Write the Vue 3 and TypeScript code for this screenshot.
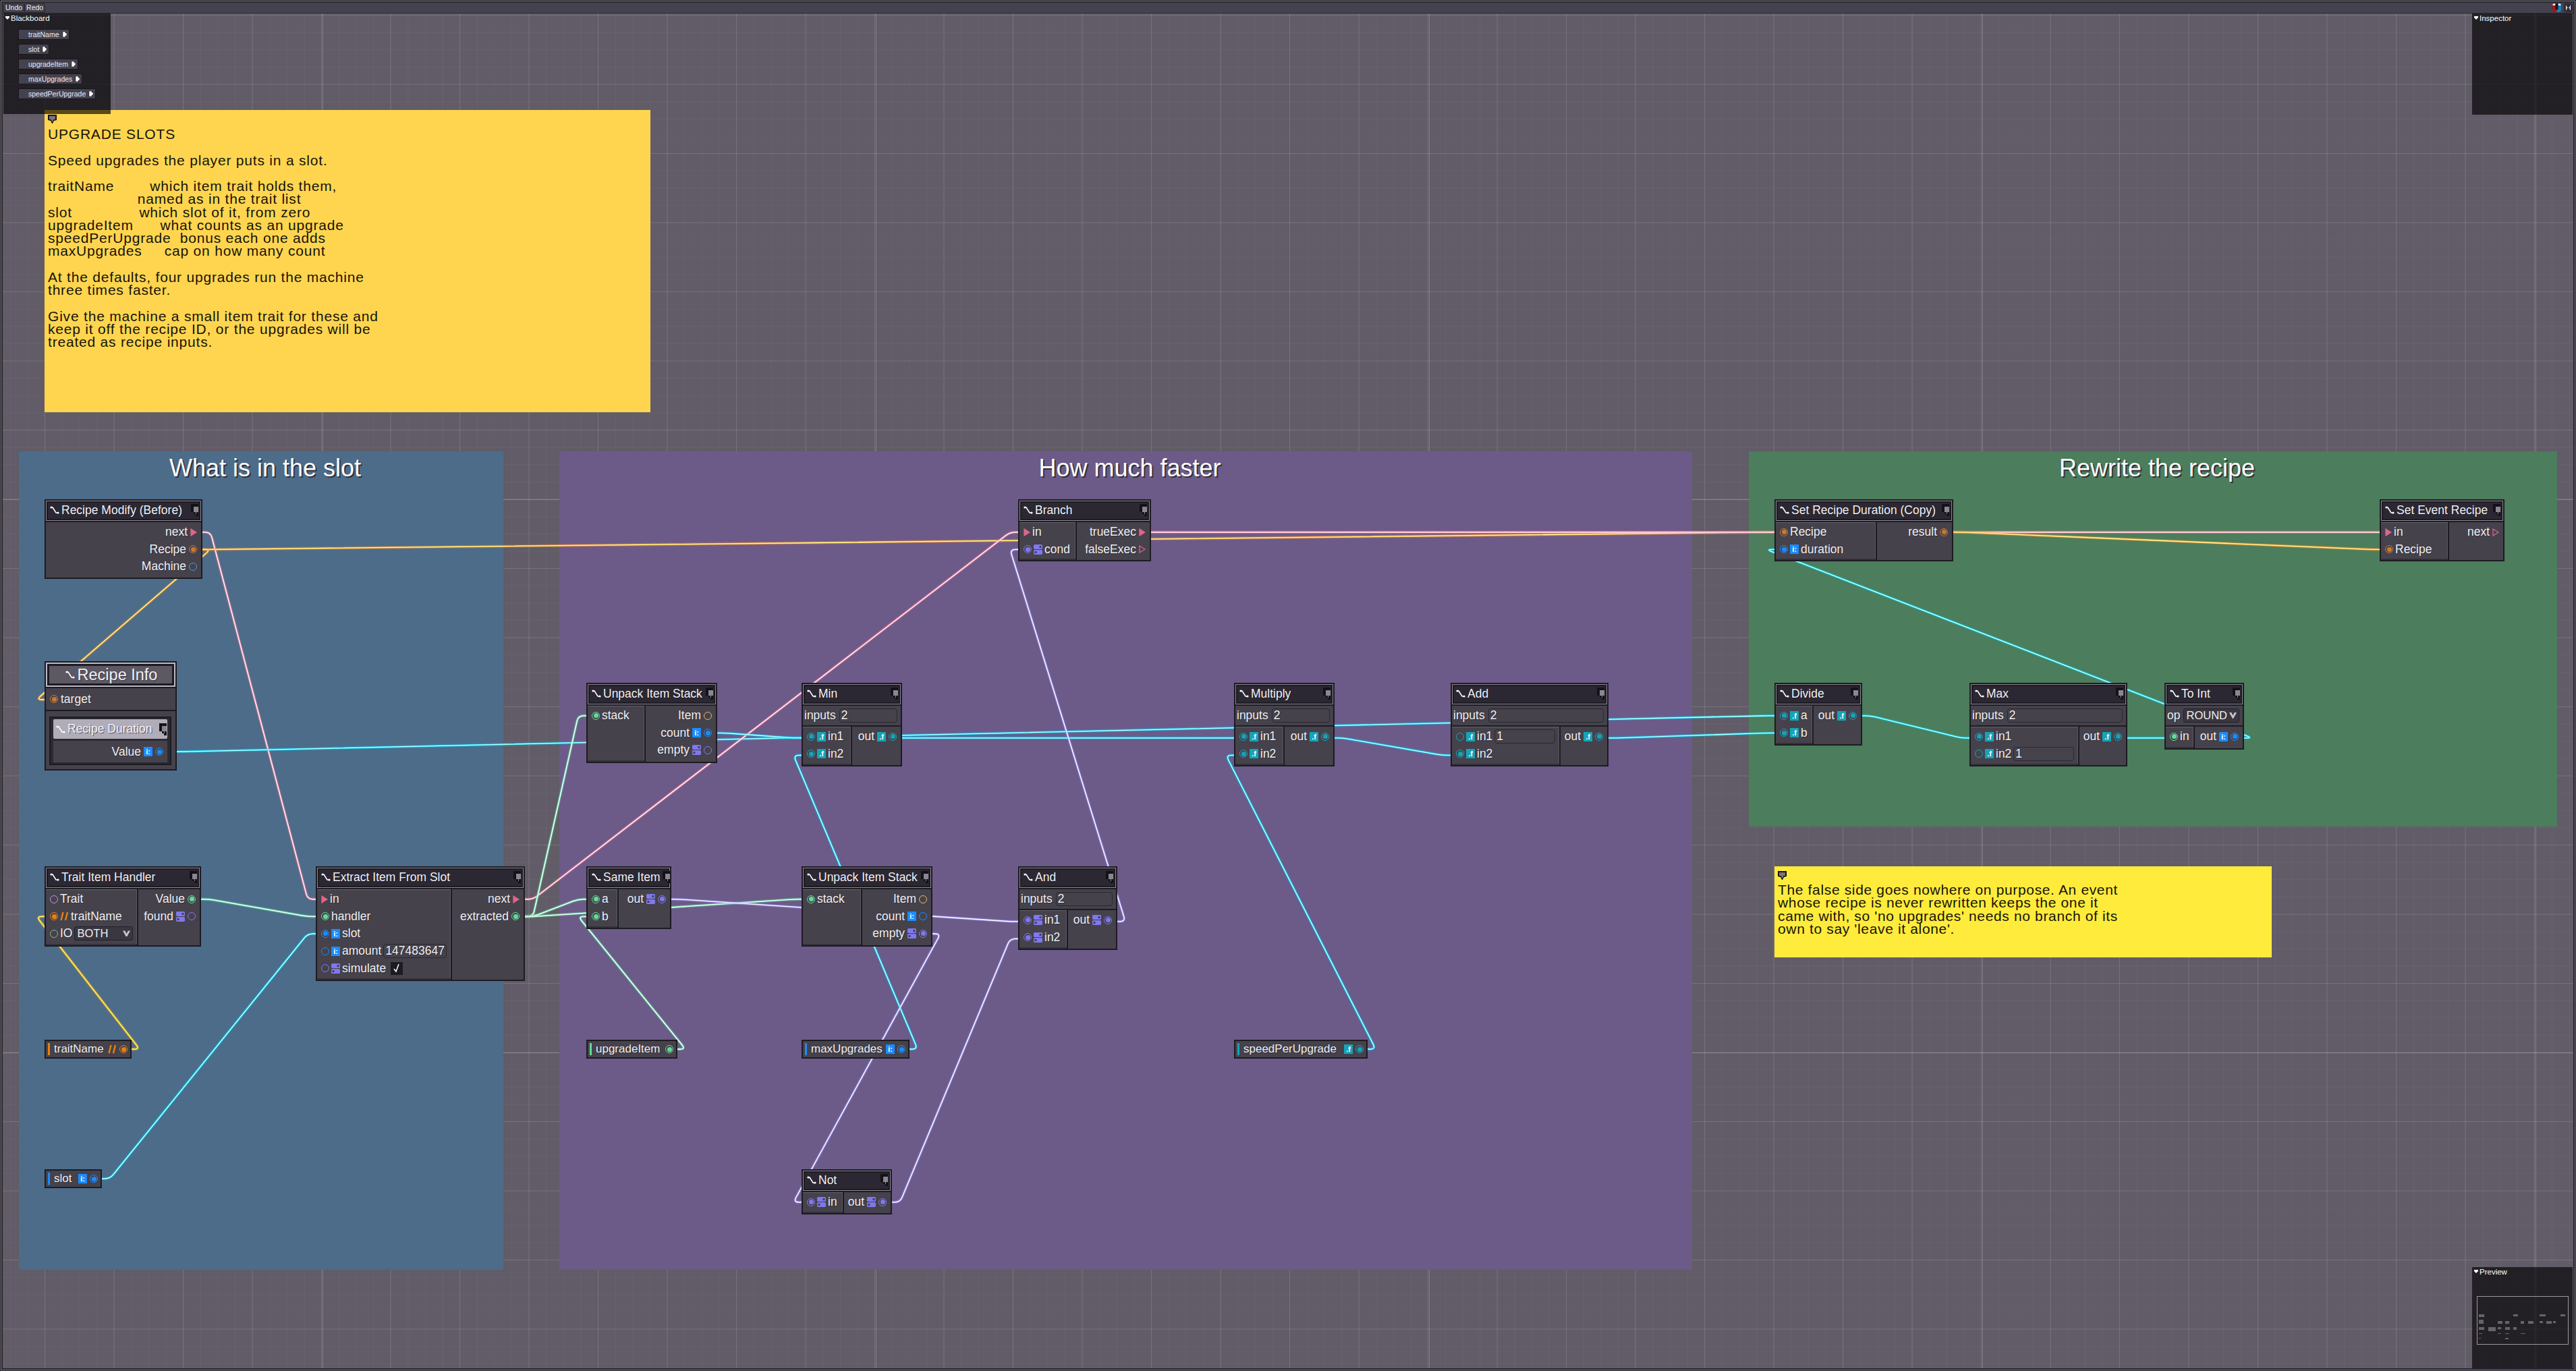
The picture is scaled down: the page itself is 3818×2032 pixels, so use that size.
<script setup lang="ts">
import { computed } from 'vue'

type Kind = 'exec' | 'recipe' | 'machine' | 'item' | 'hollowitem' | 'int' | 'float' | 'bool' | 'str' | 'trait' | 'io'
type Glyph = 'i' | 'f' | 'b' | 's'

interface Port {
  label: string
  kind: Kind
  on?: boolean
  icon?: Glyph
  field?: string
  select?: string
  check?: boolean
}

interface GraphNode {
  id: string
  title: string
  x: number
  y: number
  w: number
  h: number
  split?: number
  attr?: { label: string; value?: string; select?: string }
  left?: Port[]
  right?: Port[]
}

interface VarNode {
  id: string
  label: string
  x: number
  y: number
  w: number
  kind: Kind
  icon?: Glyph
}

const groups = [
  { title: 'What is in the slot', x: 28, y: 669, w: 718, h: 1213, tone: 'blue' },
  { title: 'How much faster', x: 829, y: 669, w: 1679, h: 1213, tone: 'purple' },
  { title: 'Rewrite the recipe', x: 2592, y: 669, w: 1198, h: 556, tone: 'green' },
]

const notes = [
  {
    x: 66, y: 163, w: 898, h: 448, tone: 'amber',
    text: `UPGRADE SLOTS

Speed upgrades the player puts in a slot.

traitName        which item trait holds them,
                    named as in the trait list
slot               which slot of it, from zero
upgradeItem      what counts as an upgrade
speedPerUpgrade  bonus each one adds
maxUpgrades     cap on how many count

At the defaults, four upgrades run the machine
three times faster.

Give the machine a small item trait for these and
keep it off the recipe ID, or the upgrades will be
treated as recipe inputs.`,
  },
  {
    x: 2630, y: 1284, w: 737, h: 135, tone: 'lemon',
    text: `The false side goes nowhere on purpose. An event
whose recipe is never rewritten keeps the one it
came with, so 'no upgrades' needs no branch of its
own to say 'leave it alone'.`,
  },
]

const f = (label: string, on = true, field?: string): Port => ({ label, kind: 'float', icon: 'f', on, field })
const b = (label: string, on = true): Port => ({ label, kind: 'bool', icon: 'b', on })
const exec = (label: string, on = true): Port => ({ label, kind: 'exec', on })

const nodes: GraphNode[] = [
  { id: 'modify', title: 'Recipe Modify (Before)', x: 66, y: 740, w: 234, h: 118,
    right: [exec('next'), { label: 'Recipe', kind: 'recipe', on: true }, { label: 'Machine', kind: 'machine' }] },
  { id: 'handler', title: 'Trait Item Handler', x: 66, y: 1284, w: 232, h: 119, split: 137,
    left: [{ label: 'Trait', kind: 'trait' }, { label: 'traitName', kind: 'str', icon: 's', on: true }, { label: 'IO', kind: 'io', select: 'BOTH' }],
    right: [{ label: 'Value', kind: 'item', on: true }, { label: 'found', kind: 'bool', icon: 'b' }] },
  { id: 'extract', title: 'Extract Item From Slot', x: 468, y: 1284, w: 310, h: 170, split: 200,
    left: [exec('in'), { label: 'handler', kind: 'item', on: true }, { label: 'slot', kind: 'int', icon: 'i', on: true },
      { label: 'amount', kind: 'int', icon: 'i', field: '147483647' }, { label: 'simulate', kind: 'bool', icon: 'b', check: true }],
    right: [exec('next'), { label: 'extracted', kind: 'item', on: true }] },
  { id: 'unpack1', title: 'Unpack Item Stack', x: 869, y: 1012, w: 194, h: 119, split: 86,
    left: [{ label: 'stack', kind: 'item', on: true }],
    right: [{ label: 'Item', kind: 'hollowitem' }, { label: 'count', kind: 'int', icon: 'i', on: true }, b('empty', false)] },
  { id: 'min', title: 'Min', x: 1188, y: 1012, w: 149, h: 124, split: 73, attr: { label: 'inputs', value: '2' },
    left: [f('in1'), f('in2')], right: [f('out')] },
  { id: 'branch', title: 'Branch', x: 1509, y: 740, w: 197, h: 92, split: 85,
    left: [exec('in'), b('cond')], right: [exec('trueExec'), exec('falseExec', false)] },
  { id: 'same', title: 'Same Item', x: 869, y: 1284, w: 126, h: 93, split: 46,
    left: [{ label: 'a', kind: 'item', on: true }, { label: 'b', kind: 'item', on: true }], right: [b('out')] },
  { id: 'unpack2', title: 'Unpack Item Stack', x: 1188, y: 1284, w: 194, h: 119, split: 88,
    left: [{ label: 'stack', kind: 'item', on: true }],
    right: [{ label: 'Item', kind: 'hollowitem' }, { label: 'count', kind: 'int', icon: 'i' }, b('empty')] },
  { id: 'and', title: 'And', x: 1509, y: 1284, w: 147, h: 124, split: 72, attr: { label: 'inputs', value: '2' },
    left: [b('in1'), b('in2')], right: [b('out')] },
  { id: 'not', title: 'Not', x: 1188, y: 1733, w: 134, h: 67, split: 61, left: [b('in')], right: [b('out')] },
  { id: 'multiply', title: 'Multiply', x: 1829, y: 1012, w: 149, h: 124, split: 73, attr: { label: 'inputs', value: '2' },
    left: [f('in1'), f('in2')], right: [f('out')] },
  { id: 'add', title: 'Add', x: 2150, y: 1012, w: 234, h: 124, split: 161, attr: { label: 'inputs', value: '2' },
    left: [f('in1', false, '1'), f('in2')], right: [f('out')] },
  { id: 'setDuration', title: 'Set Recipe Duration (Copy)', x: 2630, y: 740, w: 265, h: 92, split: 150,
    left: [{ label: 'Recipe', kind: 'recipe', on: true }, { label: 'duration', kind: 'int', icon: 'i', on: true }],
    right: [{ label: 'result', kind: 'recipe', on: true }] },
  { id: 'setEvent', title: 'Set Event Recipe', x: 3527, y: 740, w: 185, h: 92, split: 101,
    left: [exec('in'), { label: 'Recipe', kind: 'recipe', on: true }], right: [exec('next', false)] },
  { id: 'divide', title: 'Divide', x: 2630, y: 1012, w: 130, h: 93, split: 56, left: [f('a'), f('b')], right: [f('out')] },
  { id: 'max', title: 'Max', x: 2919, y: 1012, w: 234, h: 124, split: 161, attr: { label: 'inputs', value: '2' },
    left: [f('in1'), f('in2', false, '1')], right: [f('out')] },
  { id: 'toInt', title: 'To Int', x: 3208, y: 1012, w: 118, h: 99, split: 43, attr: { label: 'op', select: 'ROUND' },
    left: [{ label: 'in', kind: 'item', on: true }], right: [{ label: 'out', kind: 'int', icon: 'i', on: true }] },
]

const vars: VarNode[] = [
  { id: 'traitName', label: 'traitName', x: 66, y: 1541, w: 129, kind: 'str', icon: 's' },
  { id: 'slot', label: 'slot', x: 66, y: 1733, w: 85, kind: 'int', icon: 'i' },
  { id: 'upgradeItem', label: 'upgradeItem', x: 869, y: 1541, w: 135, kind: 'item' },
  { id: 'maxUpgrades', label: 'maxUpgrades', x: 1188, y: 1541, w: 160, kind: 'int', icon: 'i' },
  { id: 'speedPerUpgrade', label: 'speedPerUpgrade', x: 1829, y: 1541, w: 198, kind: 'float', icon: 'f' },
]

// recipe info has its own markup, so only its box is listed here
const recipeInfo = { x: 66, y: 980, w: 196, h: 162 }

const blackboard = ['traitName', 'slot', 'upgradeItem', 'maxUpgrades', 'speedPerUpgrade']

function outPoint(id: string, i: number): [number, number] {
  if (id === 'recipeInfo') return [262, 1114]
  const v = vars.find((n) => n.id === id)
  if (v) return [v.x + v.w, v.y + 14]
  const n = nodes.find((m) => m.id === id)!
  return [n.x + n.w, portY(n, i)]
}

function inPoint(id: string, i: number): [number, number] {
  if (id === 'recipeInfo') return [66, 1037]
  const n = nodes.find((m) => m.id === id)!
  return [n.x, portY(n, i)]
}

function portY(n: GraphNode, i: number) {
  return n.y + 32 + (n.attr ? 33 : 0) + 4 + (i + 0.5) * 25.6
}

// stub out of the port, straight run, stub into the next port
function wirePath(a: [number, number], d: [number, number]) {
  const stub = 12
  const bx = a[0] + stub
  const cx = d[0] - stub
  const dx = cx - bx
  const dy = d[1] - a[1]
  const len = Math.hypot(dx, dy) || 1
  const r = Math.min(8, len / 2)
  const ux = dx / len
  const uy = dy / len
  return [
    `M${a[0]} ${a[1]}`,
    `L${bx - r} ${a[1]}`,
    `Q${bx} ${a[1]} ${bx + ux * r} ${a[1] + uy * r}`,
    `L${cx - ux * r} ${d[1] - uy * r}`,
    `Q${cx} ${d[1]} ${cx + r} ${d[1]}`,
    `L${d[0]} ${d[1]}`,
  ].join(' ')
}

const links: [string, number, string, number, string][] = [
  ['modify', 0, 'extract', 0, 'exec'],
  ['modify', 1, 'setDuration', 0, 'recipe'],
  ['modify', 1, 'recipeInfo', 0, 'recipe'],
  ['recipeInfo', 0, 'divide', 0, 'int'],
  ['traitName', 0, 'handler', 1, 'str'],
  ['slot', 0, 'extract', 2, 'int'],
  ['handler', 0, 'extract', 1, 'item'],
  ['extract', 0, 'branch', 0, 'exec'],
  ['extract', 1, 'unpack1', 0, 'item'],
  ['extract', 1, 'same', 0, 'item'],
  ['extract', 1, 'unpack2', 0, 'item'],
  ['upgradeItem', 0, 'same', 1, 'item'],
  ['same', 0, 'and', 0, 'bool'],
  ['unpack1', 1, 'min', 0, 'int'],
  ['maxUpgrades', 0, 'min', 1, 'int'],
  ['min', 0, 'multiply', 0, 'int'],
  ['speedPerUpgrade', 0, 'multiply', 1, 'int'],
  ['multiply', 0, 'add', 1, 'int'],
  ['add', 0, 'divide', 1, 'int'],
  ['divide', 0, 'max', 0, 'int'],
  ['max', 0, 'toInt', 0, 'int'],
  ['toInt', 0, 'setDuration', 1, 'int'],
  ['unpack2', 2, 'not', 0, 'bool'],
  ['not', 0, 'and', 1, 'bool'],
  ['and', 0, 'branch', 1, 'bool'],
  ['branch', 0, 'setEvent', 0, 'exec'],
  ['setDuration', 0, 'setEvent', 1, 'recipe'],
]

const wires = computed(() =>
  links.map(([from, i, to, j, tone]) => ({
    d: wirePath(outPoint(from, i), inPoint(to, j)),
    tone,
  })),
)

// the preview draws every node at a small fixed scale
const miniScale = 0.0351
const miniRects = computed(() => {
  const boxes = [
    ...nodes.map((n) => ({ x: n.x, y: n.y, w: n.w, h: n.h })),
    recipeInfo,
    ...vars.map((v) => ({ x: v.x, y: v.y, w: v.w, h: 28 })),
  ]
  return boxes.map((n) => ({
    left: `${2 + (n.x - 66) * miniScale}px`,
    top: `${26 + (n.y - 740) * miniScale}px`,
    width: `${n.w * miniScale}px`,
    height: `${n.h * miniScale}px`,
  }))
})

const box = (n: { x: number; y: number; w: number; h?: number }) => ({
  left: `${n.x}px`,
  top: `${n.y}px`,
  width: `${n.w}px`,
  height: n.h ? `${n.h}px` : undefined,
})
</script>

<template>
  <div class="app">
    <header class="toolbar">
      <button class="tool">Undo</button>
      <button class="tool">Redo</button>
      <span class="spacer"></span>
      <svg class="magnet" viewBox="0 0 13 13" width="13" height="13">
        <path d="M0 1.500 1.500 0H6.500V13H4Q0 13 0 9z" fill="#a8150f" />
        <path d="M6.500 0H11.500L13 1.500V9q0 4-4 4H6.500z" fill="#1b7cc4" />
        <rect x="0.500" y="0.500" width="4" height="2.500" fill="#fff" />
        <rect x="8.500" y="0.500" width="4" height="2.500" fill="#fff" />
        <path d="M4.500 0h4v8q0 1.500-2 1.500t-2-1.500z" fill="#17151b" />
      </svg>
      <span class="fit">
        <svg viewBox="0 0 13 13" width="13" height="13">
          <path d="M3 3h1v7H3zM9 3h1v7H9zM4 5l2 1.500L4 8zM9 5 7 6.500 9 8z" fill="#e8e6ec" />
        </svg>
      </span>
    </header>

    <main class="canvas">
      <div class="world">
        <section v-for="g in groups" :key="g.title" class="group" :class="g.tone" :style="box(g)">
          <h2>{{ g.title }}</h2>
        </section>

        <div v-for="n in notes" :key="n.x" class="note" :class="n.tone" :style="box(n)">
          <svg class="pin" viewBox="0 0 13 13" width="13" height="13">
            <path d="M0 0h13v8l-4 1-2 4H6L4 9 0 8z" fill="#17151b" />
            <path d="M2 2h9v5H8.500L6.500 11 4.500 7H2z" fill="#77747f" />
          </svg>
          <p>{{ n.text }}</p>
        </div>

        <svg class="wires" width="3818" height="2032">
          <g v-for="(w, i) in wires" :key="i" fill="none" :class="'w-' + w.tone">
            <path class="glow" :d="w.d" />
            <path class="mid" :d="w.d" />
            <path class="core" :d="w.d" />
          </g>
        </svg>

        <article v-for="n in nodes" :key="n.id" class="node" :style="box(n)">
          <div class="head">
            <svg class="flow" viewBox="0 0 14 14" width="14" height="14">
              <path d="M2 3h2l5 8h3" fill="none" stroke="#fff" stroke-width="1.600" />
              <circle cx="2" cy="3" r="1.600" fill="#fff" />
              <circle cx="12" cy="11" r="1.600" fill="#fff" />
            </svg>
            <span class="title">{{ n.title }}</span>
            <svg class="collapse" viewBox="0 0 11 18" width="11" height="18">
              <path d="M0 0h11v18H7v-3H4v-3H0z" fill="#141218" />
              <path d="M4 4h7v8H8v3H7v-3H4z" fill="#8a8790" />
            </svg>
          </div>

          <div v-if="n.attr" class="attr">
            <span class="label">{{ n.attr.label }}</span>
            <span v-if="n.attr.value" class="field">{{ n.attr.value }}</span>
            <span v-else class="select">{{ n.attr.select }}<i class="chev"></i></span>
          </div>

          <div class="body">
            <div
              v-for="side in (['left', 'right'] as const)"
              :key="side"
              v-show="n[side]"
              class="col"
              :class="side"
              :style="side === 'left' && n.split ? { width: n.split + 'px' } : undefined"
            >
              <div v-for="p in n[side]" :key="p.label" class="row">
                <svg v-if="p.kind === 'exec'" class="tri" viewBox="0 0 10 12" width="10" height="12">
                  <polygon points="1,1 9,6 1,11" :fill="p.on ? '#e0668a' : 'none'" stroke="#e0668a" stroke-width="1.200" />
                </svg>
                <span v-else class="port" :class="['k-' + p.kind, { on: p.on }]"></span>
                <span v-if="p.icon === 'i'" class="tile int">i:</span>
                <span v-else-if="p.icon === 'f'" class="tile float">.f</span>
                <svg v-else-if="p.icon === 'b'" class="bool" viewBox="0 0 13 15" width="13" height="15">
                  <path d="M2.500 0h8a3 3 0 0 1 0 7h-8a3 3 0 0 1 0-7zM2.500 8h8a3 3 0 0 1 0 7h-8a3 3 0 0 1 0-7z" fill="#8078ee" />
                  <circle cx="10" cy="3.500" r="1.700" fill="#45424c" />
                  <circle cx="3" cy="11.500" r="1.700" fill="#45424c" />
                </svg>
                <svg v-else-if="p.icon === 's'" class="quote" viewBox="0 0 13 14" width="13" height="14">
                  <path d="M4.500 1 1.500 13M11 1 8 13" stroke="#e8820e" stroke-width="2.400" fill="none" />
                </svg>
                <span class="label">{{ p.label }}</span>
                <span v-if="p.field" class="field">{{ p.field }}</span>
                <span v-if="p.select" class="select">{{ p.select }}<i class="chev"></i></span>
                <span v-if="p.check" class="check">
                  <svg viewBox="0 0 14 14" width="14" height="14">
                    <path d="M3 8l3 4 4-11" fill="none" stroke="#fff" stroke-width="1.500" />
                  </svg>
                </span>
              </div>
            </div>
          </div>
        </article>

        <article class="node info" :style="box(recipeInfo)">
          <div class="info-head">
            <svg class="flow" viewBox="0 0 14 14" width="14" height="14">
              <path d="M2 3h2l5 8h3" fill="none" stroke="#fff" stroke-width="1.600" />
              <circle cx="2" cy="3" r="1.600" fill="#fff" />
              <circle cx="12" cy="11" r="1.600" fill="#fff" />
            </svg>
            <span class="title">Recipe Info</span>
          </div>
          <div class="info-row">
            <span class="port k-recipe on"></span>
            <span class="label">target</span>
          </div>
          <div class="inner">
            <div class="inner-head">
              <svg class="flow" viewBox="0 0 14 14" width="14" height="14">
                <path d="M2 3h2l5 8h3" fill="none" stroke="#fff" stroke-width="1.600" />
                <circle cx="2" cy="3" r="1.600" fill="#fff" />
                <circle cx="12" cy="11" r="1.600" fill="#fff" />
              </svg>
              <span class="title">Recipe Duration</span>
              <svg class="collapse" viewBox="0 0 11 18" width="11" height="18">
                <path d="M0 0h11v18H7v-3H4v-3H0z" fill="#141218" />
                <path d="M4 4h7v8H8v3H7v-3H4z" fill="#8a8790" />
              </svg>
            </div>
            <div class="inner-row">
              <span class="label">Value</span>
              <span class="tile int">i:</span>
              <span class="port k-int on"></span>
            </div>
          </div>
        </article>

        <article v-for="v in vars" :key="v.id" class="var" :class="'v-' + v.kind" :style="box(v)">
          <i class="bar"></i>
          <span class="label">{{ v.label }}</span>
          <span v-if="v.icon === 'i'" class="tile int">i:</span>
          <span v-else-if="v.icon === 'f'" class="tile float">.f</span>
          <svg v-else-if="v.icon === 's'" class="quote" viewBox="0 0 13 14" width="13" height="14">
            <path d="M4.500 1 1.500 13M11 1 8 13" stroke="#e8820e" stroke-width="2.400" fill="none" />
          </svg>
          <span class="port on" :class="'k-' + v.kind"></span>
        </article>
      </div>

      <aside class="panel blackboard">
        <h3>
          <svg viewBox="0 0 6 5" width="6" height="5"><path d="M0 0h6v2L3 5 0 2z" fill="#fff" /></svg>
          Blackboard
        </h3>
        <ul>
          <li v-for="item in blackboard" :key="item">
            {{ item }}
            <svg viewBox="0 0 8 9" width="8" height="9"><path d="M1 0h4v2h2v4H5v2H1z" fill="#fff" stroke="#111" stroke-width="0.500" /></svg>
          </li>
        </ul>
      </aside>

      <aside class="panel inspector">
        <h3>
          <svg viewBox="0 0 6 5" width="6" height="5"><path d="M0 0h6v2L3 5 0 2z" fill="#fff" /></svg>
          Inspector
        </h3>
      </aside>

      <aside class="panel preview">
        <h3>
          <svg viewBox="0 0 6 5" width="6" height="5"><path d="M0 0h6v2L3 5 0 2z" fill="#fff" /></svg>
          Preview
        </h3>
        <div class="mini">
          <i v-for="(r, i) in miniRects" :key="i" :style="r"></i>
        </div>
      </aside>
    </main>
  </div>
</template>

<style scoped>
.app {
  box-sizing: border-box;
  width: 100vw;
  height: 100vh;
  display: flex;
  flex-direction: column;
  padding: 4px;
  background: #2c2a31;
  box-shadow: inset 0 0 0 1px #1a181e, inset 0 0 0 2px #8f8c96, inset 0 0 0 3px #1a181e;
  font-family: "Liberation Sans", Arial, sans-serif;
  color: #f0eef2;
}

.toolbar {
  display: flex;
  align-items: center;
  height: 16px;
  padding: 0 1px;
  flex: none;
  background: #45424f;
  border-bottom: 1px solid #2a2830;
  box-sizing: border-box;
}

.tool {
  height: 14px;
  padding: 0 2px;
  margin: 0;
  border: 1px solid #2a2830;
  border-radius: 2px;
  background: #45424f;
  color: #f0eef2;
  font: 10.500px "Liberation Sans", Arial, sans-serif;
  line-height: 11px;
}

.spacer {
  flex: 1;
}

.magnet {
  border-radius: 3px;
  margin-right: 4px;
}

.fit {
  display: flex;
  width: 13px;
  height: 13px;
  background: #2f2c36;
  border-radius: 3px;
}

.canvas {
  flex: 1;
  position: relative;
  overflow: hidden;
}

.world {
  position: absolute;
  left: -4px;
  top: -20px;
  width: 3818px;
  height: 2032px;
  background-color: #615c67;
  background-image:
    linear-gradient(to right, rgba(255, 255, 255, 0.2) 1px, transparent 1px),
    linear-gradient(to bottom, rgba(255, 255, 255, 0.2) 1px, transparent 1px),
    linear-gradient(to right, rgba(255, 255, 255, 0.11) 1px, transparent 1px),
    linear-gradient(to bottom, rgba(255, 255, 255, 0.11) 1px, transparent 1px),
    linear-gradient(to right, rgba(255, 255, 255, 0.03) 1px, transparent 1px),
    linear-gradient(to bottom, rgba(255, 255, 255, 0.03) 1px, transparent 1px);
  background-size: 820px 100%, 100% 820px, 102.500px 100%, 100% 102.500px, 25.625px 100%, 100% 25.625px;
  background-position: 478px 0, 0 740px, 66px 0, 0 22px, 15px 0, 0 22px;
}

.group {
  position: absolute;
  text-align: center;
}

.group h2 {
  margin: 0;
  padding: 6px 0 0 12px;
  font-size: 36px;
  line-height: 38px;
  font-weight: 400;
  color: #fff;
  text-shadow: 2px 2px 0 #333038;
}

.blue { background: #4c6c89; }
.purple { background: #6c5a88; }
.green { background: #4c7d5c; }

.note {
  position: absolute;
  padding: 7px 5px;
  box-sizing: border-box;
  color: #16130a;
}

.amber { background: #ffd54f; }
.lemon { background: #ffeb3b; }

.pin {
  display: block;
}

.note p {
  margin: 6px 0 0;
  white-space: pre;
  font-size: 21px;
  line-height: 19.250px;
  letter-spacing: 0.800px;
}

.lemon p {
  margin-top: 5px;
  letter-spacing: 0.650px;
}

.wires {
  position: absolute;
  left: 0;
  top: 0;
}

.glow { stroke-width: 5px; opacity: 0.22; }
.mid { stroke-width: 2.400px; }
.core { stroke-width: 1.300px; }

.w-exec .glow, .w-exec .mid { stroke: #ff8aa8; }
.w-exec .core { stroke: #fff2f5; }
.w-recipe .glow, .w-recipe .mid { stroke: #ff9d2e; }
.w-recipe .core { stroke: #fff59a; }
.w-str .glow, .w-str .mid { stroke: #ffbe00; }
.w-str .core { stroke: #ffeb80; }
.w-int .glow, .w-int .mid { stroke: #00dcff; }
.w-int .core { stroke: #c4ffff; }
.w-item .glow, .w-item .mid { stroke: #6fe8ac; }
.w-item .core { stroke: #f0fff8; }
.w-bool .glow, .w-bool .mid { stroke: #a49cff; }
.w-bool .core { stroke: #fafaff; }

.node {
  position: absolute;
  box-sizing: border-box;
  display: flex;
  flex-direction: column;
  border: 2px solid #1d1b22;
  background: #45424c;
}

.head {
  flex: none;
  box-sizing: border-box;
  height: 30px;
  display: flex;
  align-items: center;
  gap: 3px;
  padding: 0 2px 2px 3px;
  background: #2c2833;
  border: 1px solid #8a8792;
  box-shadow: inset 0 0 0 2px #1d1b22;
}

.title {
  flex: 1;
  font-size: 17.500px;
  white-space: nowrap;
  color: #f2f0f4;
  text-shadow: 1px 1px 0 rgba(0, 0, 0, 0.4);
}

.flow {
  flex: none;
  margin-left: 2px;
}

.collapse {
  flex: none;
  margin-right: 1px;
}

.attr {
  flex: none;
  box-sizing: border-box;
  height: 33px;
  display: flex;
  align-items: center;
  gap: 5px;
  padding: 0 5px 0 2px;
  border-top: 2px solid #1d1b22;
  border-bottom: 2px solid #1d1b22;
}

.body {
  flex: 1;
  display: flex;
  min-height: 0;
  border-top: 2px solid #1d1b22;
}

.attr + .body {
  border-top: none;
}

.col {
  box-sizing: border-box;
  padding-top: 2px;
  flex: none;
}

.col.left {
  border-right: 2px solid #1d1b22;
  box-shadow: inset 0 1px #65626e, inset 0 -2px #33313a, inset -1px 0 #5a5762;
}

.col.right {
  flex: 1;
  min-width: 0;
}

.row {
  height: 25.600px;
  display: flex;
  align-items: center;
  gap: 3px;
  padding: 0 6px;
  white-space: nowrap;
}

.col.right .row {
  flex-direction: row-reverse;
  gap: 4px;
}

.label {
  font-size: 17.500px;
  color: #f0eef2;
  text-shadow: 1px 1px 0 rgba(0, 0, 0, 0.35);
}

.port {
  flex: none;
  box-sizing: border-box;
  width: 12px;
  height: 12px;
  border-radius: 50%;
  border: 1.500px solid var(--c);
  background: transparent;
  position: relative;
}

.port.on::after {
  content: "";
  position: absolute;
  inset: 1.500px;
  border-radius: 50%;
  background: var(--c);
}

.k-recipe { --c: #c87a30; }
.k-machine { --c: #4a9ad8; }
.k-item { --c: #66d99a; }
.k-hollowitem { --c: #e8b860; }
.k-int { --c: #1a8cff; }
.k-float { --c: #17a3b8; }
.k-bool { --c: #8078ee; }
.k-str { --c: #e8820e; }
.k-trait { --c: #b09adb; }
.k-io { --c: #7fb87f; }

.tri, .bool, .quote {
  flex: none;
}

.tile {
  flex: none;
  width: 13px;
  height: 14px;
  display: flex;
  align-items: center;
  justify-content: center;
  color: #fff;
  font-size: 11px;
  font-weight: 700;
  line-height: 14px;
}

.tile.int { background: #1a8cff; }
.tile.float { background: #17a3b8; }

.field {
  flex: 1;
  min-width: 0;
  box-sizing: border-box;
  height: 21px;
  padding: 0 2px;
  font-size: 17.500px;
  line-height: 19px;
  overflow: hidden;
  border: 1px solid #2a2830;
  border-radius: 4px;
  color: #f0eef2;
  text-shadow: 1px 1px 0 rgba(0, 0, 0, 0.35);
}

.select {
  flex: 1;
  min-width: 0;
  box-sizing: border-box;
  height: 21px;
  padding: 0 3px;
  position: relative;
  font-size: 16.500px;
  line-height: 19px;
  background: #3a3741;
  border: 1px solid #22202a;
  border-radius: 3px;
  color: #f0eef2;
}

.chev {
  position: absolute;
  right: 3px;
  top: 5px;
  width: 11px;
  height: 9px;
  background: #c8c6cc;
  clip-path: polygon(0 0, 30% 0, 50% 50%, 70% 0, 100% 0, 55% 100%, 45% 100%);
}

.check {
  flex: none;
  width: 18px;
  height: 19px;
  display: flex;
  align-items: center;
  justify-content: center;
  background: #1d1b22;
  margin-left: 4px;
}

.info-head {
  flex: none;
  box-sizing: border-box;
  height: 36px;
  display: flex;
  align-items: center;
  justify-content: center;
  gap: 4px;
  background: #5c5864;
  border: 2px solid #bcb9c2;
  box-shadow: inset 0 0 0 3px #1d1b22;
}

.info-head .title {
  flex: none;
  font-size: 23.500px;
}

.info-row {
  flex: none;
  height: 32px;
  display: flex;
  align-items: center;
  gap: 4px;
  padding: 0 6px;
  border-top: 2px solid #1d1b22;
  border-bottom: 2px solid #1d1b22;
}

.inner {
  margin: 8px 6px 6px 5px;
  flex: 1;
  display: flex;
  flex-direction: column;
  padding: 2px 4px;
  border: 2px solid #1d1b22;
  background: #2c2a31;
}

.inner-head {
  flex: none;
  box-sizing: border-box;
  height: 29px;
  display: flex;
  align-items: center;
  gap: 3px;
  background: #b0adb9;
  padding-left: 2px;
  border-radius: 2px;
}

.inner-head .title {
  font-size: 17.500px;
  color: #f6f4f8;
  text-shadow: 1px 1px 0 #55525c;
}

.inner-row {
  flex: 1;
  display: flex;
  align-items: center;
  justify-content: flex-end;
  gap: 4px;
  padding-right: 6px;
  margin-top: 3px;
  background: #45424c;
}

.var {
  position: absolute;
  box-sizing: border-box;
  height: 28px;
  display: flex;
  align-items: center;
  gap: 4px;
  padding: 0 4px 0 3px;
  background: #45424c;
  border: 2px solid #1d1b22;
}

.var .label {
  flex: 1;
  padding-left: 2px;
  white-space: nowrap;
  font-size: 17px;
}

.var .bar {
  flex: none;
  width: 3px;
  height: 18px;
  background: var(--c);
}

.v-str { --c: #e8820e; }
.v-int { --c: #1a8cff; }
.v-item { --c: #66d99a; }
.v-float { --c: #17a3b8; }

.panel {
  position: absolute;
  box-sizing: border-box;
  background: rgba(0, 0, 0, 0.65);
  color: #fff;
}

.panel h3 {
  margin: 0;
  display: flex;
  align-items: center;
  gap: 2px;
  height: 13px;
  padding-left: 3px;
  font-size: 11.500px;
  font-weight: 400;
}

.blackboard {
  left: 1px;
  top: 0;
  width: 159px;
  height: 149px;
}

.blackboard ul {
  list-style: none;
  margin: 10px 0 0 22px;
  padding: 0;
  display: flex;
  flex-direction: column;
  align-items: flex-start;
  gap: 6px;
}

.blackboard li {
  box-sizing: border-box;
  height: 16px;
  display: flex;
  align-items: center;
  gap: 4px;
  padding: 0 2px 0 14px;
  background: #45424f;
  border: 1px solid #18161c;
  font-size: 10.500px;
  color: #ece9ef;
  white-space: nowrap;
}

.inspector {
  right: 1px;
  top: 0;
  width: 149px;
  height: 150px;
}

.preview {
  right: 1px;
  bottom: 0;
  width: 149px;
  height: 150px;
}

.mini {
  position: absolute;
  left: 7px;
  top: 43px;
  width: 136px;
  height: 72px;
  box-sizing: border-box;
  border: 1px solid #9a979f;
}

.mini i {
  position: absolute;
  background: #666469;
}
</style>

<style>
html,
body {
  margin: 0;
  background: #2c2a31;
  overflow: hidden;
}
</style>
